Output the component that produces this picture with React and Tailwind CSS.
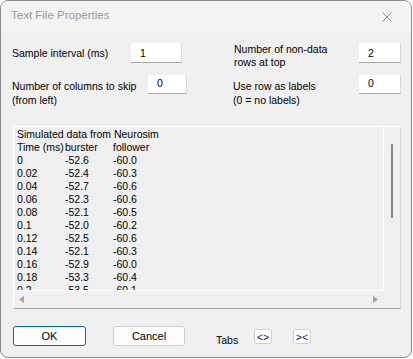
import React from 'react'

const rows = [
  ['0', '-52.6', '-60.0'],
  ['0.02', '-52.4', '-60.3'],
  ['0.04', '-52.7', '-60.6'],
  ['0.06', '-52.3', '-60.6'],
  ['0.08', '-52.1', '-60.5'],
  ['0.1', '-52.0', '-60.2'],
  ['0.12', '-52.5', '-60.6'],
  ['0.14', '-52.1', '-60.3'],
  ['0.16', '-52.9', '-60.0'],
  ['0.18', '-53.3', '-60.4'],
  ['0.2', '-53.5', '-60.1'],
]

function Field({ value, className }) {
  return (
    <div
      className={`bg-white border-b border-r border-b-[#a9a9a9] border-r-[#dadada] pl-[9px] text-black ${className}`}
    >
      {value}
    </div>
  )
}

export default function App() {
  return (
    <div className="w-[413px] h-[359px] bg-white font-['Liberation_Sans',Arial,sans-serif] text-[10.5px] text-black">
      <div className="w-[412px] h-[358px] border border-[#8a8a8a] rounded-[8px] bg-[#f0f0f0] flex flex-col overflow-hidden">
        {/* Title bar */}
        <div className="h-[30px] bg-[#f3f3f3] flex items-center justify-between pl-[10px] pr-[19px]">
          <span className="text-[11.5px] text-[#9a9a9a]">Text File Properties</span>
          <svg width="10" height="10" viewBox="0 0 10 10" className="mt-[1px]">
            <path d="M0.5 0.5 L9.5 9.5 M9.5 0.5 L0.5 9.5" stroke="#8c8c8c" strokeWidth="1" fill="none" />
          </svg>
        </div>

        {/* Settings */}
        <div className="mt-[12px] flex items-start pl-[11px]">
          <div className="w-[119px] mt-[3px] leading-[14px]">Sample interval (ms)</div>
          <Field value="1" className="w-[51px] h-[20px] leading-[20px]" />
          <div className="ml-[52px] w-[125px] leading-[13px]">
            Number of non-data
            <br />
            rows at top
          </div>
          <Field value="2" className="w-[42px] h-[20px] leading-[20px] pl-[5px]" />
        </div>

        <div className="mt-[6px] flex items-start pl-[11px]">
          <div className="w-[136px] mt-[4px] leading-[14px]">
            Number of columns to skip
            <br />
            (from left)
          </div>
          <Field value="0" className="w-[39px] h-[19px] leading-[16px]" />
          <div className="ml-[46px] w-[126px] mt-[4px] leading-[14px]">
            Use row as labels
            <br />
            (0 = no labels)
          </div>
          <Field value="0" className="w-[42px] h-[19px] leading-[16px] pl-[5px]" />
        </div>

        {/* Data preview */}
        <div className="mt-[19px] ml-[12px] w-[388px] h-[183px] border-t border-l border-white border-r border-r-[#dadada] border-b border-b-[#a0a0a0] flex flex-col">
          <div className="flex">
            <div className="w-[370px] h-[164px] border-r border-b border-white overflow-hidden pl-[3px] pt-[1px] leading-[13px]">
              <div>Simulated data from Neurosim</div>
              <div className="flex">
                <span className="w-[48px] whitespace-nowrap">Time (ms)</span>
                <span className="w-[48px]">burster</span>
                <span>follower</span>
              </div>
              {rows.map((r, i) => (
                <div key={i} className="flex">
                  <span className="w-[48px]">{r[0]}</span>
                  <span className="w-[48px]">{r[1]}</span>
                  <span>{r[2]}</span>
                </div>
              ))}
            </div>
            <div className="flex-1 pt-[17px] pl-[7px]">
              <div className="w-[2px] h-[74px] bg-[#858585] rounded-full" />
            </div>
          </div>
          <div className="flex-1 flex items-center justify-between pl-[5px] pr-[22px]">
            <svg width="5" height="7" viewBox="0 0 5 7">
              <path d="M5 0 L0 3.5 L5 7 Z" fill="#a3a3a3" />
            </svg>
            <svg width="5" height="7" viewBox="0 0 5 7">
              <path d="M0 0 L5 3.5 L0 7 Z" fill="#a3a3a3" />
            </svg>
          </div>
        </div>

        {/* Buttons */}
        <div className="mt-[17px] ml-[12px] flex items-start">
          <button className="w-[73px] h-[20px] border border-[#0067c0] rounded-[3px] bg-[#fdfdfd] text-[11px] leading-[18px]">
            OK
          </button>
          <button className="ml-[27px] w-[72px] h-[20px] border border-[#d0d0d0] rounded-[3px] bg-[#fdfdfd] text-[11px] leading-[18px]">
            Cancel
          </button>
          <span className="ml-[31px] w-[38px] mt-[8px] leading-[13px]">Tabs</span>
          <button className="w-[18px] h-[15px] mt-[3px] border border-[#cfcfcf] rounded-[3px] bg-white text-[10.5px] leading-[12px] text-[#1a1a6a]">
            &lt;&gt;
          </button>
          <button className="ml-[21px] w-[18px] h-[15px] mt-[3px] border border-[#cfcfcf] rounded-[3px] bg-white text-[10.5px] leading-[12px] text-[#1a1a6a]">
            &gt;&lt;
          </button>
        </div>
      </div>
    </div>
  )
}
